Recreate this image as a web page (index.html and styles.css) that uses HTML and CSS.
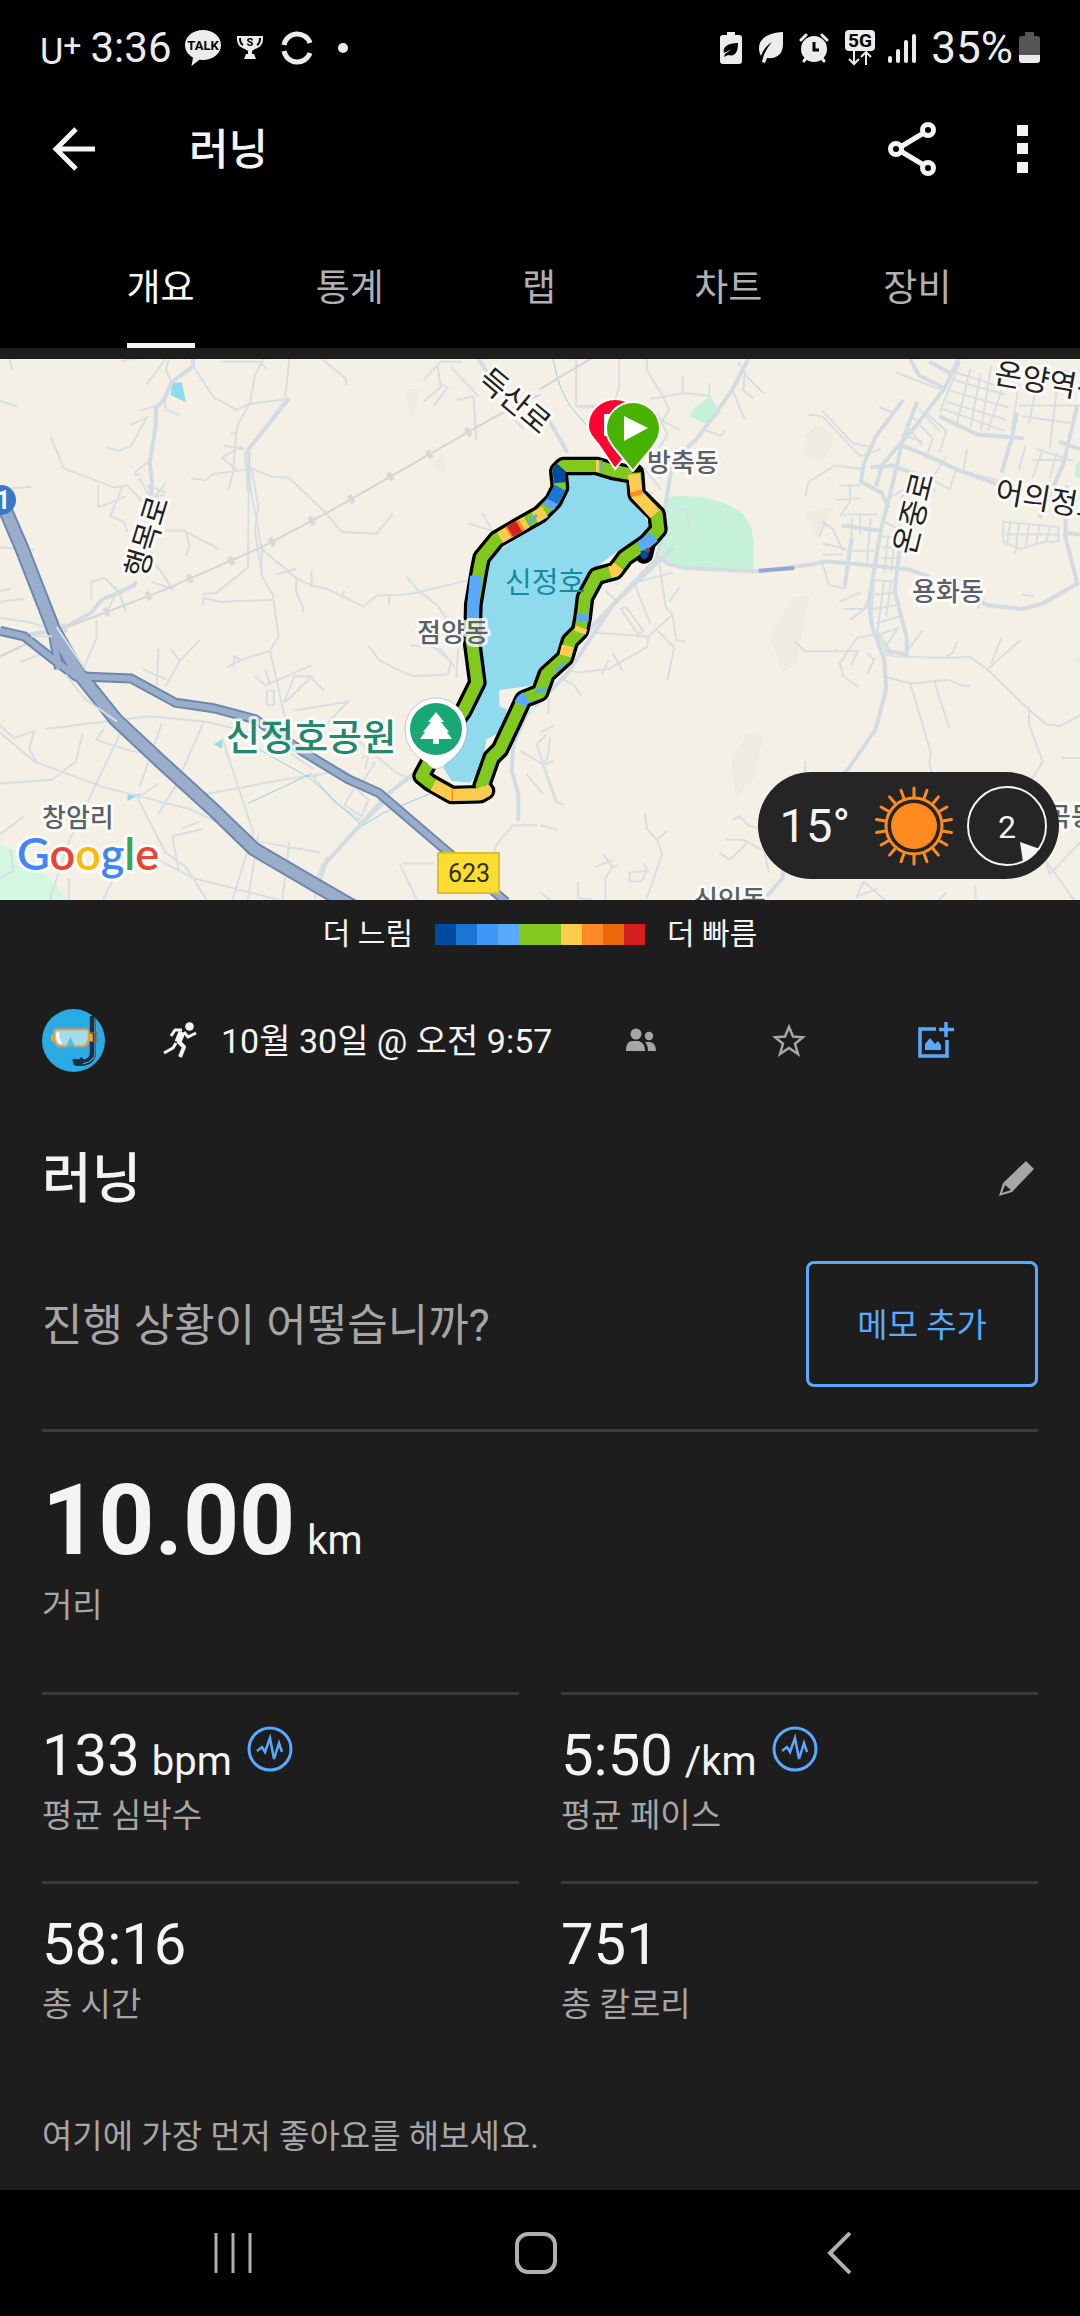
FILE: index.html
```html
<!DOCTYPE html>
<html lang="ko">
<head>
<meta charset="utf-8">
<meta name="viewport" content="width=device-width, initial-scale=1">
<title>러닝</title>
<link rel="stylesheet" href="styles.css">
</head>
<body>
<div class="status">
  <div class="status-side">
    <span class="carrier">U<span class="carrier-plus">+</span></span>
    <span class="clock">3:36</span>
    <svg class="ic-talk" width="38" height="38" viewBox="0 0 38 38"><path fill="#ececec" d="M19 1C9 1 1 7.500 1 16c0 5.500 3.300 10 8 12.600L7.500 37l8-6.200 3.500.2c10 0 18-6.500 18-15S29 1 19 1z"/><text x="19" y="21" text-anchor="middle" class="talk-text">TALK</text></svg>
    <svg class="ic-cup" width="28" height="24" viewBox="0 0 28 24"><path fill="#ececec" d="M1 0h26v3c0 6-4 9-8 10l-3 2v3h2l2 5H8l2-5h2v-3l-3-2C5 12 1 9 1 3z"/><path fill="none" stroke="#000" stroke-width="2" d="M4 2c0 4 1 6 3 7M24 2c0 4-1 6-3 7"/><text x="14" y="10" text-anchor="middle" class="cup-text">S</text></svg>
    <svg class="ic-ring" width="32" height="34" viewBox="0 0 32 34"><path fill="none" stroke="#ececec" stroke-width="5" d="M3 14A13.500 13.500 0 0 1 29 12M3 20A13.500 13.500 0 0 0 29 22"/></svg>
    <span class="dot"></span>
  </div>
  <div class="status-side">
    <svg class="ic-eco" width="22" height="32" viewBox="0 0 22 32"><path fill="#ececec" d="M7 0h8v3h4a3 3 0 0 1 3 3v23a3 3 0 0 1-3 3H3a3 3 0 0 1-3-3V6a3 3 0 0 1 3-3h4z"/><path d="M4 21c-2-6 4-10 14-10 0 8-2 14-10 12l-4 2 1-3 7-5z"/></svg>
    <svg class="ic-leaf" width="24" height="32" viewBox="0 0 24 32"><path fill="#ececec" d="M24 0C8 1 0 7 0 16c0 4 1 6 2 8 2-6 6-11 11-14-4 5-8 10-10 20l3 1 2-5c10 1 16-4 16-14z"/></svg>
    <svg class="ic-alarm" width="30" height="30" viewBox="0 0 30 30"><g stroke="#ececec" stroke-width="3" stroke-linecap="round"><path d="M2 7l5-5M28 7l-5-5M5 28l3-4M25 28l-3-4"/></g><circle cx="15" cy="16" r="13" fill="#ececec"/><path d="M15 9v8h5" fill="none" stroke="#000" stroke-width="3"/></svg>
    <svg class="ic-5g" width="30" height="36" viewBox="0 0 30 36"><rect width="30" height="21" rx="4" fill="#ececec"/><text x="15" y="17" text-anchor="middle" class="net-text">5G</text><path fill="none" stroke="#ececec" stroke-width="2" d="M9 21v13M4 29l5 5 5-5M21 35V22M16 27l5-5 5 5"/></svg>
    <svg class="ic-signal" width="30" height="31" viewBox="0 0 30 31"><path fill="none" stroke="#ececec" stroke-width="4" stroke-linecap="round" d="M3 25v3M11 18v10M19 9v19M27 3v25"/></svg>
    <span class="percent">35%</span>
    <svg width="22" height="32" viewBox="0 0 22 32"><path fill="#555" d="M6 0h9v4h3q3 0 3 3v17H0V7q0-3 3-3h3z"/><path fill="#ececec" d="M0 23h21v5q0 3-3 3H3q-3 0-3-3z"/></svg>
  </div>
</div>

<header class="appbar">
  <button class="icon-btn" aria-label="뒤로"><svg width="44" height="44" viewBox="0 0 44 44"><path fill="none" stroke="#f4f4f4" stroke-width="5" d="M43 22H5M24 2L4 22l20 20"/></svg></button>
  <h1 class="appbar-title">러닝</h1>
  <button class="icon-btn share" aria-label="공유"><svg width="48" height="56" viewBox="0 0 48 56"><g fill="none" stroke="#f4f4f4" stroke-width="5"><path d="M14 25l20-12M14 31l20 12"/><circle cx="8" cy="28" r="5.500"/><circle cx="40" cy="9" r="5.500"/><circle cx="40" cy="47" r="5.500"/></g></svg></button>
  <button class="icon-btn" aria-label="더보기"><svg width="12" height="48" viewBox="0 0 12 48"><path fill="#f4f4f4" d="M0 0h11v11H0zM0 18h11v11H0zM0 37h11v11H0z"/></svg></button>
</header>

<nav class="tabs">
  <a href="#" class="tab active">개요</a>
  <a href="#" class="tab">통계</a>
  <a href="#" class="tab">랩</a>
  <a href="#" class="tab">차트</a>
  <a href="#" class="tab">장비</a>
</nav>

<main class="page">
<section class="map">
<svg class="map-canvas" viewBox="0 0 1080 541" preserveAspectRatio="xMidYMid slice">
  <rect width="1080" height="541" fill="#f4f0e5"/>
  <g transform="translate(0 -19) scale(.3444 .3635)" class="roads">
    <path fill="#d3f8e2" d="M0 1385L100 1440 200 1540H0z"/>
    <path fill="#90daee" d="M500 118l28-2 12 55-45-20zM620 1112l25-12v24zM370 1252l42-4-42 20z"/>
    <path fill="#efebe0" d="M1175 135h45l-22 82zM1283 305l18 70-38-30z"/>
    <g class="minor">
      <path d="M28 52l8 32M0 168l50 15M147 266l38 87 145 52 40-5 43 45 65-20M490 52l-8 30 16 35M354 58l55-10M425 122l60-75M376 235l50-22-45 78-37 14-35-10M405 195l50-15M410 370l-22 0M390 365l47-35M480 165l0 25 42 17M560 72l60 85 68 36 38-20 14-75 25-46M640 60h115l20 20M840 52l-12 110-105 15-35 60-12 130-13 45M830 162L710 315l50 260v75l32 50 17 115-25 40 45 190M710 315l12 100-2 210-90 70-40 3M730 350l20 110-10 60 20 130M555 380l40 6 25-17 110-15 60 22 48 2 100 90 55 60 100 5 48-55M935 52l70 55v18M645 322l60-30M643 322l50 40M670 257h20M650 290l60 10M285 400l0 60 30-10 50-20M355 405l-35 80 40 15 10 30M405 380l45 80-20-60 50 20M480 395l-60 70M540 525h-60M485 525h50l60 30 40 20M540 530l10 35-10 30M430 590l40 50 30 45-60-20M265 715v-50l40-10 35 35-30 60M310 660l45 40M280 770v50l-45 100M345 695l20 50M760 575l100 80 45 20 45 10 105 48 40-30 70-2 40-5 150-34M905 635v45M800 645l60-15M860 655v40l20 40v15M590 730v-20l50 10 150-5M1000 690l-10 20M1130 705v25M1180 650l35 40 55 40 50 70M1070 840l30 40 50 25 50 20 100-5 10-35-50-40-70-5M1270 840l50 60M1330 850l-5 80"/>
      <path d="M0 765l80 10 70 20M0 870l60-25M60 885l85-30M460 850l-5 100M580 825l-60 60-40 70M520 880l-25-30M415 905l70 30M660 900l40-20 85-25M700 880l-20-10v30M905 895l-135 55-30-25M770 905l15 45M830 995l75-70-50 0-30 70zM775 965h20v40h-20zM905 930l35 35M300 1070l-20 30 100 30 100 20M130 1070l300-35 170 15 170 40 140 90M365 1050l-40 80-130 260-50 150M590 1055l-80 170-50 80M645 1095l90 260-60 185M510 1230l80 20 230-40 100-15M460 1220l-60 40 80 150 60 40 60 90M0 1060l40 35 60-20-15 50 20 35M0 1080l100 80 200 70 250 60 200 90 180 30M0 1220l150-10 70-50 20-80M470 1055l-65 175M500 1365l20 100M500 1365l90-20M525 1345l55-20M440 1420l120 60 250 60M750 1360l-30 180M840 1380l-20 160M930 1450l200-190M1000 1060l60 60 90 70 50 20M900 1190l70 80 90 60M910 1200l80-20 60 40 40-60M1000 1280l30-50 40 35-20 45zM1050 1150l20-10-10 40M915 1515v25M920 1480l30-60M1160 1440l50 100M1170 1440h90M1360 1500l60-50 20-60 50-55h70M850 1020l160-25-60 60M0 1360l70-50M0 1480l40-20-10-60M200 1540l0-60M300 1540l30-60"/>
      <path d="M1230 110l50-50 60 0M1270 70l10 60-50 40M1280 120l20 10-40 50M1325 165l50-10 8 120M1310 75l80 80M1400 475l30 50-70-20M1490 215l30 30"/>
      <path d="M0 690l30-5M0 720l70-8M0 570l100 8M10 410l80-6"/>
    </g>
    <path class="mid" d="M560 52v20l-62 45-20 45-25 25-1 50-17 100 6 50-2 50M395 665l-5 10-95 40-30 35-85 45-140 22M1390 52l45 70M840 160L722 300v115"/>
    <path class="mid" d="M925 1500l20-60 180-190 80-60"/>
    <path class="rail" d="M0 870l90-40M180 795L470 690 760 570 960 470 1430 215 1568 150"/>
    <path class="rail-tick" d="M180 795L470 690 760 570 960 470 1430 215 1568 150"/>
    <path class="stream" d="M750 1125l150 80 145 125M720 1275l180-80M1055 1335l60-35 130-50"/>
    <g class="hw-edge"><path d="M12 460l50 110 95 230 70 115 110 130 130 115 150 130 120 110 180 100 110 60"/><path d="M0 800l70 15 80 60 70 50 160 6 130 67 110 15 120 30 140 90 130 75 90 38 370 300"/><path d="M150 790l22 115"/></g>
    <g class="hw-fill"><path class="wide" d="M12 460l50 110 95 230 70 115 110 130 130 115 150 130 120 110 180 100 110 60"/><path d="M0 800l70 15 80 60 70 50 160 6 130 67 110 15 120 30 140 90 130 75 90 38 370 300"/><path d="M150 790l22 115"/></g>
    <path class="minor" d="M90 815h60M190 920l60 70 90 60M165 790l85 120"/>
  </g>
  <g transform="translate(540 -19) scale(.3444 .3635)" class="roads">
    <path fill="#c4f1d7" d="M370 432q60-6 110 2 70 15 110 45 30 40 30 80v70l-200-2q-70-5-70-37z"/>
    <path fill="#c4f1d7" d="M450 185l45-30 30 45-35 35-55-25zM1555 345l13-15v48h-13zM205 650l20-20v45z"/>
    <path fill="#efebe0" d="M768 262l40-30 45 30-18 60-40 10-27-20zM768 475l85-15-45 90zM738 705h45l-38 185-40 25-38-100zM602 1083h47l-25 115-57 65-10-110zM1540 880l28-10v18z"/>
    <g class="minor">
      <path d="M105 52v130l60-2M230 52v80l-30 80M310 52v30l45 70 20 40-20 30 50 25M110 185h80M320 162l100-16 75 8M415 100v45M492 120v35M575 60l20 30-5 50 30 20M595 95l55 52M555 130l40 90M470 245l55 18 15-15M340 200l30 60-40 60M300 350l50 60M310 340l40 40M270 430l60-10M375 460l50 10 10 60"/>
      <path d="M345 605l20 130 20 20-70 60-170-10M285 665l100-25M270 660l50 120M235 740l50 70 15-10-50-65zM385 755l10 70 30 5M315 815l-5 30-110 60-90 10-40-10M340 800l50 45-20 90M210 860l30 50M180 920l20-40M60 930l40 20 20 30M25 980v50M190 690l35 30M405 680l-30 40"/>
      <path d="M0 1080l40-20M30 1095l-10 60-15 5 40 110 25 8M0 1335l50 12M305 1300l5 45 30 30 15 40-45 120M340 1375l30-25M190 1540v-60l20-30 20-5M210 1450l-25-35M160 1450l50-20M260 1465l50-5-15 30h-35zM300 1440l15 25M560 1320l20-10 25 25 30 8M540 1375h50l60 30 15 60M520 1410l30 20 50-45M770 1160v30"/>
      <path d="M780 205l40 5 110 110 60-20M820 195l90 90 60 10M1035 90l140 50M985 185l40 15M1220 60l-60 140M1250 80l-40 150M1280 90l-30 150M1310 70l-30 180M1210 90l130 40M1200 110l150 40M1190 140l170 45M1180 170l175 50M1170 190l180 60M1350 60l-10 80-40 110M1390 120l-20 130M1440 130l-20 100M1500 140l-20 160M1390 180h178M1400 210l150 20M1120 200l60 50-20 60M1100 190l60 60M1080 210l60 60-20 60M1060 230l50 60M1050 260l60 20M1240 300l-10 60 150 40M1180 320l-40 60M1110 370l80 40 20-60M1090 400l60 15M1440 300l100 30M1410 290l-20 70M1460 300l-30 80M1500 310l-20 70M1430 330h120M1520 330l-20 60M850 350l-70 40-10 40M850 345l90 10M900 395v50l-30 40M870 400h60M860 440l70-5M820 500l30 20 30 60M830 500l-20 40M880 480h100M905 490v60M930 480v55M820 560l70 15M820 590h60M890 580h80M960 490l-10 120"/>
      <path d="M1100 400l-50 30-10 180M1020 430l40-20M1000 500l60 30M990 540l60 5M990 570h55M990 600h60M1010 540l-10 100M1030 540l-10 100M970 660l60 5M970 700l60-5M965 740l70-10M975 780l70-20M985 810l60-20M1000 850l40-60M970 660l-10 120 50 80M1000 660l-20 140 40 60M1020 660l-15 100M820 615l20 60 45 8 20-130M870 720l60-25M880 740l60 0 20-40M900 770l50-35"/>
      <path d="M1345 500l160 15v40h-40l-70 20-50-20zM1365 505l-10 60M1390 508l-10 80M1420 510l-10 60M1450 512l-10 50M1480 515l-10 40M1350 535h155M740 828l28 28h155l-20 40M970 810l-50 10-50 70 10 35 45 30M860 850v10M950 860l20 20-20 40M1000 865l30 5 150 5 70-3 50 35 120 110 50 40 40 5 60-30M1180 870l20-10 10-30M1300 905l95-80M1310 890l30-70M1065 855l45-55M995 925l80 20 110-10 40 15 25 2M1075 945l60 190-5 30 20 60M1145 940l45 130M1420 1020v40l40 100-100 150M1420 1010l0 30M1515 1150h53M1550 1540l-90-120M1570 1380l-90 90-20-60M940 1490l-20 40 60-20M940 1490l60 50M1265 1500v40M1180 1520l-20 20M1400 700l35 5M1270 740l20-30M0 1520l30 20M110 1490v45l40 5"/>
    </g>
    <path class="mid" d="M605 52l-50 90-100 130-70 60-20 120-5 70-20 75 35 20 45 10 220 10 150-20 40-8 140 12 100 10 60 20M1075 52l25 45 75 35M1215 52l-40 80-80 100-100 110-20 60M1095 170l-40 100-40 160-25 90-35 200 10 70 35 90 5 80-30 110-80 110-100 100M1055 165l-80 100-35 75-8 50 60 30 20 40M960 350l60-5 90 30M1050 290l80 30 90 40 130 45M1130 60l60 30M1160 210l110 50 135 10M1385 200l-15 70-30 95M1560 180l-40 160-70 150M1500 80l68 20M1530 400l-5 140 35 130-100 55-60 15-100-10-60-30M875 510l110 15M905 545l-20 130M1050 530l-20 160 35 130v45l-65-10M20 210l60 100M345 595L140 800l-50 60M1568 300l-60-20M1525 530l43 5M650 1540l55-60v-40"/>
    <path class="blue-road" d="M635 635l103-8"/>
    <path class="stream" d="M38 52q15 80 50 130l45 50"/>
    <path class="rail" d="M0 135l150-85"/>
  </g>
  <g transform="translate(380 32) scale(.3333)">
    <path fill="#90daee" d="M550 240L740 270 815 415 700 490 660 520 610 600 590 700 520 830 450 885 358 897V945L380 955 375 1000 350 1030 320 1045 300 1140 270 1175 215 1170 190 1130 230 1050 300 900 280 640 310 510 520 370z"/>
    <path class="mid-c" d="M880 470L700 640 560 850 440 970 400 1060 395 1140 415 1210V1290"/>
    <path class="road-c" d="M420 1080l70 40 30-10M490 1120l-20-60 30-30M490 1120l40 110M440 1150l50 60"/>
    <path fill="#d3f8e2" d="M440 960l30-30-10 40zM690 570l20-10v25z"/>
    <path class="route-edge" d="M765 245L770 310 830 370 835 415 800 455 735 500 705 540 650 555 615 620 608 680 600 720 570 750 555 800 500 850 480 905 430 925 400 990 360 1075 335 1100 305 1185 318 1200 300 1210 215 1212 150 1175 125 1155 165 1080 250 960 292 875 277 760 280 640 297 540 305 500 350 445 410 410 480 370 520 330 540 290 535 240 550 225 650 225 700 240 755 250M800 455l-8 35"/>
    <path class="route green" d="M765 245L770 310 830 370 835 415 800 455 735 500 705 540 650 555 615 620 608 680 600 720 570 750 555 800 500 850 480 905 430 925 400 990 360 1075 335 1100 305 1185 318 1200 300 1210 215 1212 150 1175 125 1155 165 1080 250 960 292 875 277 760 280 640 297 540 305 500 350 445 410 410 480 370 520 330 540 290 535 240 550 225 650 225 700 240 755 250"/>
    <g class="route cut">
      <path stroke="#ffcc4d" d="M762 250L770 310 825 370M716 526L704 540 690 544M605 710L600 725M563 765L556 795M310 1190L318 1200 300 1210 215 1212 160 1182M360 440L440 393M465 380L495 362M648 225h10"/>
      <path stroke="#ff8a26" d="M767 300l4 14M385 425L425 401M215 1212l4 0"/>
      <path stroke="#d41f1f" d="M390 422L417 406"/>
      <path stroke="#59aaff" d="M822 437L780 470M608 670v22M440 918L425 930 420 940M278 680L280 640 288 555M538 824l6 6M480 893l4 10M455 382l6 6M505 350L530 310M661 225h6"/>
      <path stroke="#1976d2" d="M518 332L540 290"/>
      <path stroke="#004aa0" d="M540 275L536 240 545 230"/>
    </g>
    <path fill="#004aa0" d="M782 480l30-6-10 26-10 6-10-8z"/><circle cx="803" cy="478" r="7" fill="#a3294a"/>
  </g>
  <circle cx="1" cy="141" r="15" fill="#3a78c9"/>
  <text x="-4" y="150" class="shield">1</text>
  <rect x="438" y="494" width="61" height="40" fill="#ffdc32" stroke="#e0c12c" stroke-width="2"/>
  <text x="469" y="523" text-anchor="middle" class="num">623</text>
  <g class="place">
    <text x="417" y="283">점양동</text>
    <text x="42" y="468">창암리</text>
    <text x="647" y="113">방축동</text>
    <text x="912" y="242">용화동</text>
    <text x="694" y="550">신인동</text>
    <text x="1047" y="467">곡동</text>
  </g>
  <g class="street">
    <text text-anchor="middle" transform="translate(508 50) rotate(40)">득산로</text>
    <text text-anchor="middle" transform="translate(157 181) rotate(-73)">행목로</text>
    <text text-anchor="middle" transform="translate(924 157) rotate(-76)">온중로</text>
    <text transform="translate(993 24) rotate(10)">온양역전로</text>
    <text transform="translate(994 142) rotate(10)">어의정로</text>
  </g>
  <text x="505" y="234" class="lake">신정호</text>
  <text x="226" y="392" class="park">신정호공원</text>
  <g><path fill="#fff" stroke="#0003" d="M436 410q-5 0-9-6-22-12-22-34a31 31 0 0 1 62 0q0 20-20 34-6 6-11 6z"/><circle cx="436" cy="370" r="26" fill="#19a873"/><path fill="#fff" d="M436 353l8 10h-3l8 10h-2l5 7h-13v5h-6v-5h-13l5-7h-2l8-10h-3z"/></g>
  <path fill="#ff0430" stroke="#fff" stroke-width="2" d="M615 110l-17-25C592 78 588 74 588 67a27 27 0 0 1 54 0c0 10-8 19-12 25z"/>
  <path fill="#fff" d="M604 55h12v22h-12z"/>
  <path fill="#47b300" stroke="#fff" stroke-width="2" d="M633 112l-18-22c-6-8-9-13-9-20a27 27 0 0 1 54 0c0 7-3 12-9 20z"/>
  <path fill="#fff" d="M624 57l24 12-24 13z"/>
  <text x="17" y="511" class="google"><tspan fill="#4285f4">G</tspan><tspan fill="#ea4335">o</tspan><tspan fill="#fbbc05">o</tspan><tspan fill="#4285f4">g</tspan><tspan fill="#34a853">l</tspan><tspan fill="#ea4335">e</tspan></text>
</svg>
<div class="weather">
  <span class="temp">15°</span>
  <svg width="82" height="82" viewBox="-41 -41 82 82"><circle r="23" fill="#ff8a1f"/><circle r="28" fill="none" stroke="#ff8a1f" stroke-width="3"/><g stroke="#ff8a1f" stroke-width="3" stroke-linecap="round"><path id="r" d="M0-29V-38"/><use href="#r" transform="rotate(20)"/><use href="#r" transform="rotate(40)"/><use href="#r" transform="rotate(60)"/><use href="#r" transform="rotate(80)"/><use href="#r" transform="rotate(100)"/><use href="#r" transform="rotate(120)"/><use href="#r" transform="rotate(140)"/><use href="#r" transform="rotate(160)"/><use href="#r" transform="rotate(180)"/><use href="#r" transform="rotate(200)"/><use href="#r" transform="rotate(220)"/><use href="#r" transform="rotate(240)"/><use href="#r" transform="rotate(260)"/><use href="#r" transform="rotate(280)"/><use href="#r" transform="rotate(300)"/><use href="#r" transform="rotate(320)"/><use href="#r" transform="rotate(340)"/></g></svg>
  <svg width="82" height="82" viewBox="-41 -41 82 82"><circle r="39" fill="none" stroke="#f4f4f4" stroke-width="2"/><path fill="#f4f4f4" d="M13 16L33 23 16 36z"/><text y="12" text-anchor="middle" class="wind">2</text></svg>
</div>
</section>

<div class="legend">
  <span>더 느림</span>
  <div class="scale"><i class="c1"></i><i class="c2"></i><i class="c3"></i><i class="c4"></i><i class="c5"></i><i class="c5"></i><i class="c6"></i><i class="c7"></i><i class="c8"></i><i class="c9"></i></div>
  <span>더 빠름</span>
</div>

<div class="content">
  <div class="meta">
    <svg class="avatar" width="63" height="63" viewBox="0 0 62 62"><circle cx="31" cy="31" r="31" fill="#2babe3"/><path fill="none" stroke="#15304b" stroke-width="6" d="M50 7v36q0 9-11 10l-8-1"/><path fill="none" stroke="#7aa3bd" stroke-width="1" d="M52 9v35q-1 8-12 10"/><path fill="#15304b" d="M29 49l5 3 5-5 3 4-3 5h-6z"/><path fill="#f5a623" d="M9 25h4v7H9zM45 24h5v8h-5z"/><rect x="46" y="23" width="8" height="9" fill="none" stroke="#8b6b3a"/><path fill="#a8dbe8" stroke="#dc9b4a" stroke-width="2" d="M14 20h30q2 0 2 3v7q-1 7-8 7h-6l-4-5-4 5h-4q-7 0-8-7v-7q0-3 2-3z"/><path fill="none" stroke="#fff" stroke-width="3" d="M16 23q-2 7 3 11"/><path fill="#5fb9d8" d="M28 27l4 10h-8z"/></svg>
    <svg class="runner" width="34" height="36" viewBox="0 0 34 36"><circle cx="26.500" cy="4.500" r="4.300" fill="#f4f4f4"/><g fill="none" stroke="#f4f4f4" stroke-linejoin="round"><path stroke-width="3" d="M19 8L12 8 8 14M21 10l4 5 8-4M13 21l-3 5-9 5"/><path stroke-width="7" d="M19 10l-4 10"/><path stroke-width="4" d="M15 19l6 6-4 10"/></g></svg>
    <time class="date">10월 30일 @ 오전 9:57</time>
    <div class="actions">
      <button class="icon-btn" aria-label="공개 범위"><svg width="30" height="24" viewBox="0 0 30 24"><g fill="#a6a6a6"><circle cx="10" cy="6" r="5.500"/><circle cx="23" cy="8" r="4.200"/><path d="M0 23q0-10 6-10h7q6 2 6 10zM19 14h5q6 1 6 9h-8q0-6-3-9z"/></g></svg></button>
      <button class="icon-btn" aria-label="즐겨찾기"><svg width="34" height="34" viewBox="0 0 34 34"><path fill="none" stroke="#a6a6a6" stroke-width="2.500" d="M17 4l4 9.500 10 .7-8 6.600 3 10.200-9-6-9 6 3-10.200-8-6.600 10-.7z"/></svg></button>
      <button class="icon-btn" aria-label="사진 추가"><svg width="36" height="36" viewBox="0 0 36 36"><path fill="none" stroke="#59aaff" stroke-width="3.500" d="M18 7H2v27h27V18M28 0v15M21 7.500h15"/><path fill="#59aaff" d="M7 28v-6l5-6 5 6 3-3 3 4v5z"/></svg></button>
    </div>
  </div>

  <div class="title-row">
    <h2 class="name">러닝</h2>
    <button class="icon-btn" aria-label="이름 편집"><svg class="pencil" width="35" height="35" viewBox="0 0 35 35"><path fill="#a6a6a6" fill-rule="evenodd" d="M27 0l8 8-22 23L0 35 4 22zM6 24l-3 8 9-3z"/></svg></button>
  </div>

  <div class="note-row">
    <p class="prompt">진행 상황이 어떻습니까?</p>
    <button class="note-btn">메모 추가</button>
  </div>

  <section class="distance">
    <div class="big">10.00<span class="unit">km</span></div>
    <div class="label">거리</div>
  </section>

  <section class="stats">
    <div class="stat"><div class="value">133<span class="unit">bpm</span><svg class="pulse" width="46" height="46" viewBox="0 0 46 46"><g fill="none" stroke="#59aaff"><circle cx="23" cy="23" r="21" stroke-width="3"/><path stroke-width="2.500" d="M10 25l5-4 3 5 5-14 4 21 5-16 3 9"/></g></svg></div><div class="label">평균 심박수</div></div>
    <div class="stat"><div class="value">5:50<span class="unit">/km</span><svg class="pulse" width="46" height="46" viewBox="0 0 46 46"><g fill="none" stroke="#59aaff"><circle cx="23" cy="23" r="21" stroke-width="3"/><path stroke-width="2.500" d="M10 25l5-4 3 5 5-14 4 21 5-16 3 9"/></g></svg></div><div class="label">평균 페이스</div></div>
    <div class="stat"><div class="value">58:16</div><div class="label">총 시간</div></div>
    <div class="stat"><div class="value">751</div><div class="label">총 칼로리</div></div>
  </section>

  <p class="likes">여기에 가장 먼저 좋아요를 해보세요.</p>
</div>
</main>

<footer class="navbar">
  <button class="icon-btn" aria-label="최근 앱"><svg width="38" height="42" viewBox="0 0 38 42"><path stroke="#b0b0b0" stroke-width="3" d="M2 1v40M19 1v40M36 1v40"/></svg></button>
  <button class="icon-btn" aria-label="홈"><svg width="42" height="42" viewBox="0 0 42 42"><rect x="2" y="2" width="38" height="38" rx="11" fill="none" stroke="#b0b0b0" stroke-width="4"/></svg></button>
  <button class="icon-btn" aria-label="뒤로 가기"><svg width="24" height="42" viewBox="0 0 24 42"><path fill="none" stroke="#b0b0b0" stroke-width="4" d="M23 1L3 21l20 20"/></svg></button>
</footer>
</body>
</html>
```
FILE: styles.css
```css
* { box-sizing: border-box; margin: 0; }
body {
  display: flex;
  flex-direction: column;
  min-height: 100vh;
  background: #000;
  color: #f4f4f4;
  font-family: Roboto, "Noto Sans CJK KR", sans-serif;
  font-size: 33px;
  line-height: 48px;
}
svg { display: block; flex: none; }
.icon-btn {
  display: flex;
  align-items: center;
  justify-content: center;
  padding: 0;
  border: 0;
  background: none;
}

/* system status bar */
.status {
  display: flex;
  justify-content: space-between;
  height: 96px;
  padding: 0 39px 0 40px;
  color: #ececec;
}
.status-side { display: flex; align-items: center; }
.carrier { font-size: 36px; }
.carrier-plus { font-size: 32px; vertical-align: 8px; }
.clock { margin-left: 9px; font-size: 42px; }
.percent { margin-left: 14px; margin-right: 6px; font-size: 44px; }
.talk-text { font: 700 13px Roboto, sans-serif; }
.cup-text { font: 700 11px Roboto, sans-serif; }
.net-text { font: 700 19px Roboto, sans-serif; }
.ic-talk { margin-left: 12px; }
.ic-cup { margin-left: 14px; }
.ic-ring { margin-left: 17px; }
.dot { width: 10px; height: 10px; margin-left: 25px; border-radius: 50%; background: #ececec; }
.ic-leaf { margin-left: 17px; }
.ic-alarm { margin-left: 16px; }
.ic-5g { margin-left: 16px; }
.ic-signal { margin-left: 12px; }

/* app bar and tabs */
.appbar { display: flex; align-items: center; height: 105px; padding: 0 51px 0 52px; }
.appbar-title { margin-left: 93px; padding-top: 2px; font-size: 43px; font-weight: 500; }
.share { margin-left: auto; margin-right: 81px; }
.tabs {
  display: grid;
  grid-template-columns: repeat(5, 1fr);
  justify-items: center;
  padding: 64px 68px 0 66px;
}
.tab {
  padding-bottom: 30px;
  border-bottom: 5px solid transparent;
  color: #b0b0b0;
  font-size: 37px;
  text-decoration: none;
}
.tab.active { border-color: #f4f4f4; color: #fff; }

.page { flex: 1; padding-top: 11px; background: #1d1d1d; }

/* map */
.map { position: relative; }
.map-canvas { width: 100%; height: auto; }
.roads path { vector-effect: non-scaling-stroke; }
.minor, .mid, .rail, .rail-tick, .stream, .blue-road, .mid-c, .road-c, .hw-edge, .hw-fill { fill: none; }
.minor { stroke: #d8dfe3; stroke-width: 2px; }
.mid { stroke: #d3dce3; stroke-width: 4px; }
.mid-c { stroke: #d3dce3; stroke-width: 12px; }
.road-c { stroke: #d8dfe3; stroke-width: 6px; }
.rail { stroke: #d5d5d8; stroke-width: 2px; }
.rail-tick { stroke: #d8d8dc; stroke-width: 9px; stroke-dasharray: 5 40; }
.stream { stroke: #90d3e0; stroke-width: 1px; }
.blue-road { stroke: #93a8ca; stroke-width: 4px; }
.hw-edge { stroke: #6d87ad; stroke-width: 10px; }
.hw-fill { stroke: #9aaecb; stroke-width: 6px; }
.hw-edge path:first-child { stroke-width: 15px; }
.wide { stroke-width: 11px; }
.route-edge { fill: none; stroke: #000; stroke-width: 56px; stroke-linejoin: round; stroke-linecap: round; }
.route { fill: none; stroke-width: 36px; stroke-linejoin: round; }
.green { stroke: #82c91e; }
.place { fill: #5a5f68; font-size: 26px; font-weight: 500; }
.street { fill: #222; font-size: 30px; }
.place, .street, .park, .google {
  paint-order: stroke;
  stroke: #fffc;
  stroke-width: 6px;
  stroke-linejoin: round;
}
.lake { fill: #138ca0; font-size: 29px; }
.park { fill: #24886a; font-size: 37px; font-weight: 500; }
.shield { fill: #fff; font-size: 25px; font-weight: 700; }
.num { fill: #332f20; font-size: 25px; }
.google { font: 600 45px Lato, sans-serif; }
.weather {
  position: absolute;
  right: 21px;
  bottom: 21px;
  display: flex;
  align-items: center;
  gap: 11px;
  height: 107px;
  padding: 0 11px 0 22px;
  border-radius: 54px;
  background: #252525;
}
.temp { margin-right: 12px; font-size: 47px; }
.wind { fill: #f4f4f4; font-size: 32px; }

/* pace legend */
.legend {
  display: flex;
  align-items: center;
  justify-content: center;
  gap: 22px;
  height: 68px;
  font-size: 30px;
}
.scale { display: flex; }
.scale i { width: 21px; height: 21px; }
.c1 { background: #004aa0; }
.c2 { background: #1976d2; }
.c3 { background: #3f97f6; }
.c4 { background: #59aaff; }
.c5 { background: #82c91e; }
.c6 { background: #ffcc4d; }
.c7 { background: #ff8a26; }
.c8 { background: #ec660b; }
.c9 { background: #d41f1f; }

.content { padding: 0 42px; }
.meta { display: flex; align-items: center; height: 144px; }
.runner { margin-left: 58px; }
.date { margin-left: 24px; padding-top: 2px; font-size: 34px; white-space: nowrap; }
.actions { display: grid; flex: 1; grid-template-columns: repeat(3, 1fr); padding: 0 28px 0 15px; }
.title-row { display: flex; align-items: center; justify-content: space-between; height: 132px; }
.name { padding-top: 3px; font-size: 54px; font-weight: 500; }
.pencil { margin-right: 4px; }
.note-row {
  display: flex;
  align-items: center;
  justify-content: space-between;
  padding: 17px 0 42px;
  border-bottom: 3px solid #3b3b3b;
}
.prompt { padding-top: 3px; color: #a6a6a6; font-size: 44px; }
.note-btn {
  height: 126px;
  padding: 3px 48px 0;
  border: 3px solid #59aaff;
  border-radius: 8px;
  background: none;
  color: #59aaff;
  font: inherit;
}

/* figures */
.distance { padding: 33px 0 62px; }
.big { margin-bottom: 5px; font-size: 98px; font-weight: 700; line-height: 112px; }
.unit { margin-left: 12px; font-size: 40px; font-weight: 400; line-height: 1; }
.label { color: #a6a6a6; }
.stats { display: grid; grid-template-columns: 1fr 1fr; column-gap: 42px; }
.stat { padding: 26px 0 41px; border-top: 3px solid #3b3b3b; }
.value { display: flex; align-items: baseline; margin-bottom: 3px; font-size: 58px; line-height: 68px; }
.pulse { align-self: flex-start; margin: 5px 0 0 15px; }
.likes { padding: 43px 0 29px; color: #a6a6a6; }

/* system navigation */
.navbar {
  display: grid;
  grid-template-columns: repeat(3, 1fr);
  height: 126px;
  padding: 0 90px 0 82px;
}
```
